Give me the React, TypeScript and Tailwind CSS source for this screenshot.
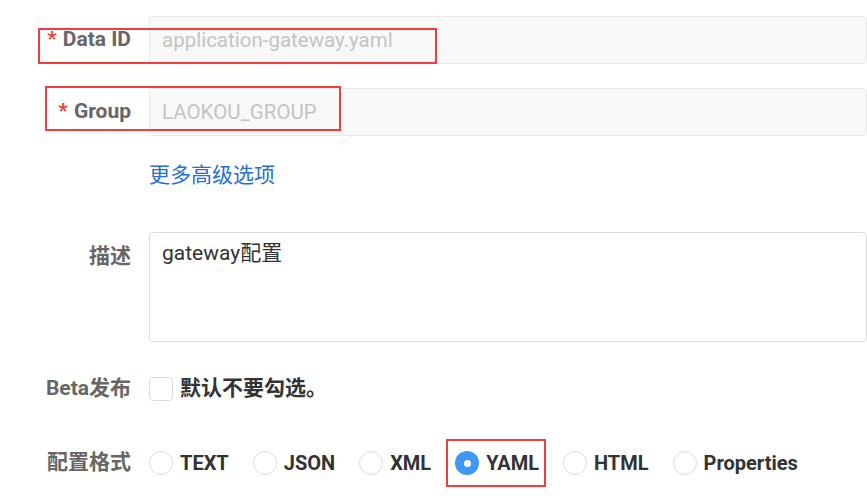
import React from 'react';

const font = { fontFamily: 'Roboto, "Noto Sans CJK SC", sans-serif' };

const formats = ['TEXT', 'JSON', 'XML', 'YAML', 'HTML', 'Properties'];

const Label: React.FC<{ text: string; required?: boolean; className?: string }> = ({ text, required, className }) => (
  <div className={`w-[131px] shrink-0 mr-[18px] text-right text-[21px] font-bold text-[#666] ${className ?? ''}`}>
    {required && <span className="text-[#e8412f] mr-[6px]">*</span>}
    {text}
  </div>
);

const Radio: React.FC<{ label: string; checked?: boolean }> = ({ label, checked }) => (
  <label className="flex items-center mr-[24px]">
    {checked ? (
      <span className="w-[24px] h-[24px] rounded-full bg-[#3f98f5] flex items-center justify-center">
        <span className="w-[7px] h-[7px] rounded-full bg-white" />
      </span>
    ) : (
      <span className="w-[24px] h-[24px] rounded-full border border-[#dcdcdc] bg-white" />
    )}
    <span className="ml-[7px] text-[20px] font-bold text-[#333]">{label}</span>
  </label>
);

export default function App() {
  return (
    <div className="relative w-[867px] h-[497px] overflow-hidden bg-white" style={font}>
      <div className="pt-[16px]">
        {/* Data ID */}
        <div className="flex items-center">
          <Label text="Data ID" required />
          <div className="w-[760px] h-[48px] rounded-[4px] border border-[#e8e8e8] bg-[#f8f8f8] flex items-center pl-[12px] text-[20.5px] text-[#c4c4c4]">
            application-gateway.yaml
          </div>
        </div>

        {/* Group */}
        <div className="flex items-center mt-[24px]">
          <Label text="Group" required />
          <div className="w-[760px] h-[48px] rounded-[4px] border border-[#e8e8e8] bg-[#f8f8f8] flex items-center pl-[12px] text-[20.5px] text-[#c4c4c4]">
            LAOKOU_GROUP
          </div>
        </div>

        {/* advanced */}
        <div className="flex mt-[25px]">
          <div className="w-[149px] shrink-0" />
          <a className="text-[21px] text-[#2470d6] leading-[28px]">更多高级选项</a>
        </div>

        {/* 描述 */}
        <div className="flex mt-[43px]">
          <Label text="描述" className="pt-[9px]" />
          <div className="w-[760px] h-[110px] rounded-[4px] border border-[#dcdcdc] bg-white pl-[12px] pt-[5px] text-[21px] text-[#333]">
            gateway配置
          </div>
        </div>

        {/* Beta */}
        <div className="flex items-center h-[24px] mt-[35px]">
          <Label text="Beta发布" />
          <span className="w-[24px] h-[24px] rounded-[4px] border border-[#dcdcdc] bg-white" />
          <span className="ml-[7px] text-[21px] font-bold text-[#333]">默认不要勾选。</span>
        </div>

        {/* 配置格式 */}
        <div className="flex items-center h-[24px] mt-[50px]">
          <Label text="配置格式" />
          {formats.map(f => (
            <Radio key={f} label={f} checked={f === 'YAML'} />
          ))}
        </div>
      </div>

      {/* annotation boxes */}
      <div className="absolute left-[38px] top-[28px] w-[399px] h-[36px] border-2 border-[#f73b3b]" />
      <div className="absolute left-[45px] top-[86px] w-[296px] h-[45px] border-2 border-[#f73b3b]" />
      <div className="absolute left-[446px] top-[439px] w-[100px] h-[48px] border-2 border-[#f73b3b]" />
    </div>
  );
}
